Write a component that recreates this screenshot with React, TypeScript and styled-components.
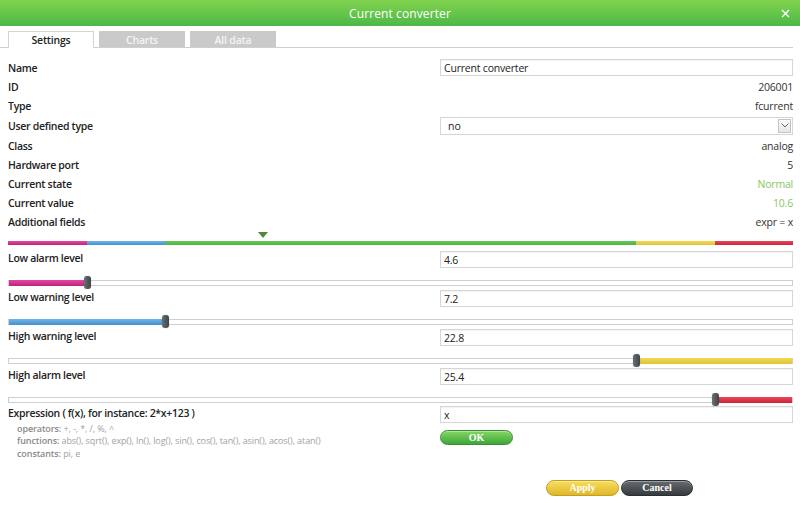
import { createGlobalStyle, styled } from 'styled-components';

const GlobalStyle = createGlobalStyle`
	html, body {
		margin: 0;
		padding: 0;
		background: #fff;
	}
	body {
		font-family: 'Open Sans', 'Noto Sans', sans-serif;
	}
`;

const MIN = 2;
const MAX = 28;
const pct = (v: number) => ((v - MIN) / (MAX - MIN)) * 100;

const info = [
	{ label: 'ID', value: '206001' },
	{ label: 'Type', value: 'fcurrent' },
];

const info2 = [
	{ label: 'Class', value: 'analog' },
	{ label: 'Hardware port', value: '5' },
	{ label: 'Current state', value: 'Normal', good: true },
	{ label: 'Current value', value: '10.6', good: true },
	{ label: 'Additional fields', value: 'expr = x' },
];

const levels = [
	{ label: 'Low alarm level', value: 4.6, color: 'magenta', high: false },
	{ label: 'Low warning level', value: 7.2, color: 'blue', high: false },
	{ label: 'High warning level', value: 22.8, color: 'yellow', high: true },
	{ label: 'High alarm level', value: 25.4, color: 'red', high: true },
];

const palette: Record<string, [string, string]> = {
	magenta: ['#dc4ba0', '#c2217f'],
	blue: ['#72b3e6', '#4590cf'],
	green: ['#66c758', '#4cb544'],
	yellow: ['#f1da5a', '#e2c232'],
	red: ['#e54a5a', '#cf2238'],
};

export default function App() {
	const current = 10.6;
	return (
		<>
			<GlobalStyle />
			<Window>
				<TitleBar>
					<Title>Current converter</Title>
					<Close>
						<svg width='9' height='9' viewBox='0 0 9 9'>
							<path d='M1 1 L8 8 M8 1 L1 8' stroke='#fff' strokeWidth='1.4' />
						</svg>
					</Close>
				</TitleBar>
				<Tabs>
					<Tab active>Settings</Tab>
					<Tab>Charts</Tab>
					<Tab>All data</Tab>
				</Tabs>
				<Body>
					<Row>
						<Label>Name</Label>
						<Input defaultValue='Current converter' />
					</Row>
					{info.map((r) => (
						<Row key={r.label}>
							<Label>{r.label}</Label>
							<Value>{r.value}</Value>
						</Row>
					))}
					<Row tall>
						<Label>User defined type</Label>
						<SelectBox>
							<span>no</span>
							<Arrow>
								<svg width='8' height='5' viewBox='0 0 8 5'>
									<path d='M0.5 0.5 L4 4 L7.5 0.5' fill='none' stroke='#666' strokeWidth='1' />
								</svg>
							</Arrow>
						</SelectBox>
					</Row>
					{info2.map((r) => (
						<Row key={r.label}>
							<Label>{r.label}</Label>
							<Value good={r.good}>{r.value}</Value>
						</Row>
					))}

					<Scale>
						<Marker style={{ left: `${pct(current)}%` }} />
						<ColorBar>
							<Segment color='magenta' size={10} />
							<Segment color='blue' size={10} />
							<Segment color='green' size={60} />
							<Segment color='yellow' size={10} />
							<Segment color='red' size={10} />
						</ColorBar>
					</Scale>

					{levels.map((l) => (
						<LevelBlock key={l.label}>
							<Row slim>
								<Label raised>{l.label}</Label>
								<Input defaultValue={String(l.value)} />
							</Row>
							<Slider>
								<Track>
									<Fill
										color={l.color}
										style={
											l.high
												? { left: `${pct(l.value)}%`, right: 0 }
												: { left: 0, width: `${pct(l.value)}%` }
										}
									/>
								</Track>
								<Thumb style={{ left: `${pct(l.value)}%` }} />
							</Slider>
						</LevelBlock>
					))}

					<Row slim>
						<Label raised>Expression ( f(x), for instance: 2*x+123 )</Label>
						<Input defaultValue='x' />
					</Row>
					<HelpRow>
						<Help>
							<div>
								<b>operators:</b> +, -, *, /, %, ^
							</div>
							<div>
								<b>functions:</b> abs(), sqrt(), exp(), ln(), log(), sin(), cos(), tan(), asin(), acos(), atan()
							</div>
							<div>
								<b>constants:</b> pi, e
							</div>
						</Help>
						<div>
							<PillButton kind='ok'>OK</PillButton>
						</div>
					</HelpRow>

					<Footer>
						<PillButton kind='apply'>Apply</PillButton>
						<PillButton kind='cancel'>Cancel</PillButton>
					</Footer>
				</Body>
			</Window>
		</>
	);
}

const Window = styled.div`
	width: 800px;
	height: 509px;
	background: #fff;
	overflow: hidden;
`;

const TitleBar = styled.div`
	position: relative;
	height: 26px;
	display: flex;
	align-items: center;
	justify-content: center;
	background: linear-gradient(#82d34e, #4cb848);
`;

const Title = styled.div`
	color: #fff;
	font-size: 12px;
	letter-spacing: 0.1px;
`;

const Close = styled.div`
	position: absolute;
	right: 10px;
	top: 9px;
	line-height: 0;
`;

const Tabs = styled.div`
	display: flex;
	gap: 5px;
	margin: 5px 7px 0 0;
	padding-left: 8px;
	border-bottom: 1px solid #cfcfcf;
`;

const Tab = styled.div<{ active?: boolean }>`
	width: 86px;
	box-sizing: border-box;
	display: flex;
	align-items: center;
	justify-content: center;
	font-size: 10.5px;
	font-weight: 600;
	letter-spacing: -0.2px;
	color: ${({ active }) => (active ? '#222' : '#f4f4f4')};
	background: ${({ active }) => (active ? '#fff' : '#cacaca')};
	border: 1px solid ${({ active }) => (active ? '#d4d4d4' : '#cacaca')};
	border-bottom: none;
	margin-bottom: ${({ active }) => (active ? '-1px' : '0')};
	height: ${({ active }) => (active ? '17px' : '16px')};
`;

const Body = styled.div`
	padding: 10px 7px 0 8px;
`;

const Row = styled.div<{ tall?: boolean; slim?: boolean }>`
	display: grid;
	grid-template-columns: 432px 1fr;
	align-items: center;
	height: ${({ tall, slim }) => (tall ? '21px' : slim ? '17px' : '19px')};
`;

const Label = styled.div<{ raised?: boolean }>`
	font-size: 10.5px;
	font-weight: 600;
	color: #222;
	letter-spacing: -0.3px;
	white-space: nowrap;
	margin-top: ${({ raised }) => (raised ? '-3px' : '0')};
`;

const Value = styled.div<{ good?: boolean }>`
	text-align: right;
	font-size: 10.5px;
	color: ${({ good }) => (good ? '#86c75e' : '#333')};
	letter-spacing: -0.2px;
`;

const Input = styled.input`
	box-sizing: border-box;
	width: 100%;
	height: 17px;
	border: 1px solid #d6d6d6;
	box-shadow: inset 0 1px 1px rgba(0, 0, 0, 0.05);
	padding: 0 3px;
	font-family: inherit;
	font-size: 10.5px;
	color: #222;
	outline: none;
	letter-spacing: -0.2px;
`;

const SelectBox = styled.div`
	box-sizing: border-box;
	height: 18px;
	display: flex;
	align-items: center;
	justify-content: space-between;
	border: 1px solid #d6d6d6;
	padding: 0 1px 0 7px;
	font-size: 10.5px;
	color: #222;
`;

const Arrow = styled.div`
	width: 13px;
	height: 14px;
	box-sizing: border-box;
	border: 1px solid #c4c4c4;
	background: linear-gradient(#fafafa, #e6e6e6);
	display: flex;
	align-items: center;
	justify-content: center;
`;

const Scale = styled.div`
	position: relative;
	padding-top: 10px;
	margin-bottom: 5px;
`;

const Marker = styled.div`
	position: absolute;
	top: 1px;
	width: 0;
	height: 0;
	transform: translateX(-100%);
	border-left: 5px solid transparent;
	border-right: 5px solid transparent;
	border-top: 6px solid #4f8a3a;
`;

const ColorBar = styled.div`
	display: flex;
	height: 4px;
`;

const Segment = styled.div<{ color: string; size: number }>`
	flex: 0 0 ${({ size }) => size}%;
	background: linear-gradient(${({ color }) => palette[color][0]}, ${({ color }) => palette[color][1]});
`;

const LevelBlock = styled.div`
	padding-top: 1px;
`;

const Slider = styled.div`
	position: relative;
	height: 13px;
	margin-top: 8px;
	display: flex;
	align-items: center;
`;

const Track = styled.div`
	position: relative;
	flex: 1;
	height: 6px;
	box-sizing: border-box;
	border: 1px solid #cfcfcf;
	background: #fff;
`;

const Fill = styled.div<{ color: string }>`
	position: absolute;
	top: -1px;
	bottom: -1px;
	background: linear-gradient(${({ color }) => palette[color][0]}, ${({ color }) => palette[color][1]});
`;

const Thumb = styled.div`
	position: absolute;
	top: 0;
	width: 7px;
	height: 13px;
	margin-left: -3px;
	border-radius: 3px;
	background: linear-gradient(90deg, #6a6f72, #3f4447);
	box-shadow: 0 0 1px rgba(0, 0, 0, 0.4);
`;

const HelpRow = styled.div`
	display: grid;
	grid-template-columns: 432px 1fr;
`;

const Help = styled.div`
	padding: 0 0 0 9px;
	font-size: 9px;
	line-height: 12.3px;
	color: #a2a2a2;
	letter-spacing: -0.1px;
	b {
		font-weight: 600;
		color: #8a8a8a;
	}
`;

const buttonColors = {
	ok: { top: '#84d762', bottom: '#3fa63a', border: '#3b8e33', w: '73px' },
	apply: { top: '#f6de5e', bottom: '#e0b72a', border: '#c29d1e', w: '73px' },
	cancel: { top: '#666c6f', bottom: '#363b3e', border: '#2a2e30', w: '72px' },
};

const PillButton = styled.div<{ kind: 'ok' | 'apply' | 'cancel' }>`
	box-sizing: border-box;
	width: ${({ kind }) => buttonColors[kind].w};
	height: ${({ kind }) => (kind === 'ok' ? '15px' : '16px')};
	margin-top: ${({ kind }) => (kind === 'ok' ? '7px' : '0')};
	border-radius: 8px;
	border: 1px solid ${({ kind }) => buttonColors[kind].border};
	background: linear-gradient(${({ kind }) => buttonColors[kind].top}, ${({ kind }) => buttonColors[kind].bottom});
	display: flex;
	align-items: center;
	justify-content: center;
	font-family: 'Liberation Serif', serif;
	font-weight: bold;
	font-size: 10px;
	color: #fff;
	box-shadow: inset 0 1px 0 rgba(255, 255, 255, 0.35);
`;

const Footer = styled.div`
	display: flex;
	justify-content: flex-end;
	gap: 2px;
	padding-right: 100px;
	margin-top: 20px;
`;
